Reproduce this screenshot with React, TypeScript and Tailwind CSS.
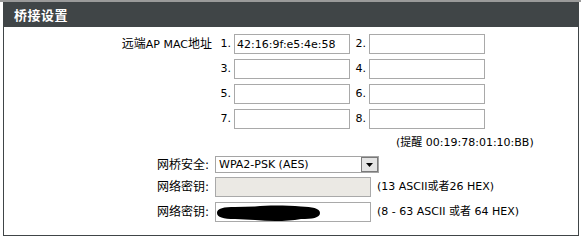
import React from "react";

// ─── MAC field ─────────────────────────────────────────────────
const Box = ({ value = "", w = "w-[116px]" }: { value?: string; w?: string }) => (
  <input
    type="text"
    defaultValue={value}
    className={`${w} h-[20px] border border-[#a9a9a9] bg-white px-[2px] text-[11px] text-black outline-none`}
  />
);

const Num = ({ n }: { n: number }) => <span className="text-right pr-[3px]">{n}.</span>;

const macs = ["42:16:9f:e5:4e:58", "", "", "", "", "", "", ""];

// ─── Select ────────────────────────────────────────────────────
const FakeSelect = () => (
  <div className="w-[164px] h-[17px] border border-[#a5a5a5] bg-white flex items-center">
    <span className="flex-1 pl-[3px] leading-none">WPA2-PSK (AES)</span>
    <div className="w-[17px] h-[15px] border border-[#7a7a7a] bg-[#e4e4e4] flex items-center justify-center">
      <svg width="7" height="4" viewBox="0 0 7 4">
        <path d="M0 0 H7 L3.5 4 Z" fill="#000" />
      </svg>
    </div>
  </div>
);

export default function App() {
  return (
    <div className="w-[581px] h-[240px] bg-white text-black text-[11px] font-['DejaVu_Sans','Noto_Sans_CJK_SC',sans-serif]">
      <div className="h-[2px] bg-[#9a9a9a]" />
      <div className="ml-[3px] w-[576px]">
        {/* ─── Header ─── */}
        <div className="h-[25px] bg-[#404547] flex items-center pl-[11px] text-white font-bold text-[13px] tracking-[0.5px] font-['Noto_Sans_CJK_SC',sans-serif]">
          桥接设置
        </div>

        {/* ─── Body ─── */}
        <div className="h-[209px] border-x border-b border-[#404547] pt-[7px]">
          <div className="grid grid-cols-[214px_16px_116px_19px_116px] auto-rows-[20px] gap-y-[5px] items-center">
            <span className="text-right pr-[6px]">
              <span className="text-[12px]">远端</span>AP MAC<span className="text-[12px]">地址</span>
            </span>
            <Num n={1} />
            <Box value={macs[0]} />
            <Num n={2} />
            <Box value={macs[1]} />
            {[3, 5, 7].map((n) => (
              <React.Fragment key={n}>
                <span />
                <Num n={n} />
                <Box value={macs[n - 1]} />
                <Num n={n + 1} />
                <Box value={macs[n]} />
              </React.Fragment>
            ))}
          </div>

          <div className="mt-[6px] h-[16px] pl-[392px] flex items-center">
            (提醒 00:19:78:01:10:BB)
          </div>

          <div className="mt-[5px] flex items-center h-[17px]">
            <span className="w-[211px] text-right pr-[6px] text-[12px]">网桥安全:</span>
            <FakeSelect />
          </div>

          <div className="mt-[4px] flex items-center h-[20px]">
            <span className="w-[211px] text-right pr-[6px] text-[12px]">网络密钥:</span>
            <div className="w-[156px] h-[20px] border border-[#a9a9a9] bg-[#ebe9e4]" />
            <span className="ml-[6px]">(13 ASCII或者26 HEX)</span>
          </div>

          <div className="mt-[5px] flex items-center h-[20px]">
            <span className="w-[211px] text-right pr-[6px] text-[12px]">网络密钥:</span>
            <div className="relative">
              <Box w="w-[156px]" />
              <svg className="absolute left-0 top-0" width="156" height="20" viewBox="0 0 156 20">
                <path
                  d="M2 11 C2 6 9 5 20 5 L40 4.5 C55 3 72 3.5 86 4.5 C97 5 105 6 105 11 C105 16 97 17 86 17 C72 19.5 55 19.5 40 18 L20 17 C8 17 2 15 2 11 Z"
                  fill="#000"
                />
              </svg>
            </div>
            <span className="ml-[6px]">(8 - 63 ASCII 或者 64 HEX)</span>
          </div>
        </div>
      </div>
    </div>
  );
}
